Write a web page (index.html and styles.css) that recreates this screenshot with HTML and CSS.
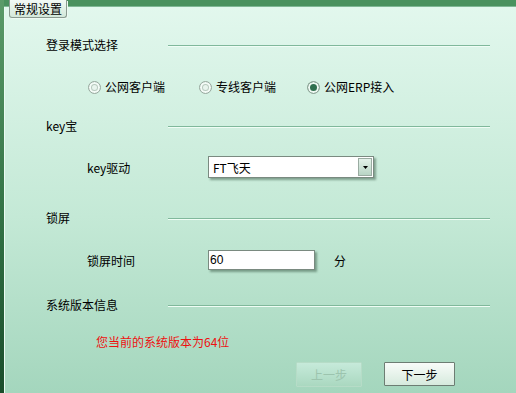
FILE: index.html
```html
<!DOCTYPE html>
<html lang="zh-CN">
<head>
    <meta charset="UTF-8">
    <title>常规设置</title>
    <link rel="stylesheet" href="styles.css">
</head>
<body>
    <div class="window">
        <div class="edge"></div>
        <div class="main">
            <div class="topbar">
                <div class="tab">常规设置</div>
            </div>

            <div class="panel">
                <div class="section-head">
                    <span class="title">登录模式选择</span>
                    <span class="rule"></span>
                </div>
                <div class="radio-row">
                    <label class="radio item-1"><span class="dot"></span>公网客户端</label>
                    <label class="radio item-2"><span class="dot"></span>专线客户端</label>
                    <label class="radio checked"><span class="dot"></span>公网ERP接入</label>
                </div>

                <div class="section-head head-key">
                    <span class="title">key宝</span>
                    <span class="rule"></span>
                </div>
                <div class="field-row row-key">
                    <span class="field-label">key驱动</span>
                    <div class="select">
                        <span class="select-text">FT飞天</span>
                        <span class="select-btn">
                            <svg width="5" height="3" viewBox="0 0 5 3"><path d="M0 0h5L2.5 3z" fill="#000"/></svg>
                        </span>
                    </div>
                </div>

                <div class="section-head head-lock">
                    <span class="title">锁屏</span>
                    <span class="rule"></span>
                </div>
                <div class="field-row row-lock">
                    <span class="field-label">锁屏时间</span>
                    <div class="textbox">60</div>
                    <span class="unit">分</span>
                </div>

                <div class="section-head head-version">
                    <span class="title">系统版本信息</span>
                    <span class="rule"></span>
                </div>
                <div class="version-note">您当前的系统版本为64位</div>

                <div class="buttons">
                    <button class="btn btn-disabled" disabled>上一步</button>
                    <button class="btn btn-next">下一步</button>
                </div>
            </div>
        </div>
    </div>
</body>
</html>
```

FILE: styles.css
```css
body {
    margin: 0;
    padding: 0;
    font-family: "Noto Sans CJK SC", "Liberation Sans", sans-serif;
    font-size: 12px;
    color: #000;
}

.window {
    width: 516px;
    height: 393px;
    display: flex;
    overflow: hidden;
    background: linear-gradient(#e3f8ee, #c4e9d6 55%, #a4d6bd);
}

.edge {
    width: 4px;
    background: linear-gradient(#5b9b69, #2f6e42 60%, #1a4d2b);
    box-shadow: 1px 0 0 #eafaf2;
}

.main {
    flex: 1;
    display: flex;
    flex-direction: column;
}

.topbar {
    height: 6px;
    background: #4a915e;
    box-shadow: 0 1px 0 #7fb795;
    position: relative;
}

/* tab hangs over the panel below */
.tab {
    position: absolute;
    left: 5px;
    top: 0;
    width: 52px;
    height: 17px;
    padding-left: 4px;
    line-height: 17px;
    border: 1px solid #8a9a90;
    border-top: none;
    border-radius: 0 0 3px 3px;
    background: linear-gradient(#f2faf5, #d3e8da);
    box-shadow: 1px 1px 0 #eefaf3;
}

.panel {
    padding-top: 30px;
}

/* section headings with a groove line */
.section-head {
    display: flex;
    align-items: center;
    height: 18px;
    line-height: 18px;
    padding-left: 42px;
}

.section-head .title {
    width: 122px;
}

.section-head .rule {
    width: 322px;
    height: 1px;
    background: #80b89b;
    box-shadow: 0 1px 0 #effdf5;
}

.head-key {
    margin-top: 21px;
}

.head-lock {
    margin-top: 31px;
}

.head-version {
    margin-top: 26px;
}

/* radio buttons */
.radio-row {
    display: flex;
    align-items: center;
    height: 18px;
    margin-top: 24px;
    padding-left: 84px;
    line-height: 18px;
}

.radio {
    display: flex;
    align-items: center;
}

.item-1 {
    width: 111px;
}

.item-2 {
    width: 108px;
}

.dot {
    width: 11px;
    height: 11px;
    margin-right: 4px;
    border: 1px solid #97a89e;
    border-radius: 50%;
    background: #e9f5ee;
    box-shadow: inset 0 0 0 2px #f4fbf7, inset 0 0 0 3px #b9cabf;
}

.radio.checked .dot {
    background: #2f6f4e;
    box-shadow: inset 0 0 0 2px #eef8f2;
}

/* field rows */
.field-row {
    display: flex;
    align-items: center;
    padding-left: 83px;
}

.field-label {
    width: 121px;
}

.row-key {
    margin-top: 21px;
    height: 22px;
}

.row-lock {
    margin-top: 23px;
    height: 20px;
}

.select {
    width: 164px;
    height: 20px;
    display: flex;
    align-items: center;
    justify-content: space-between;
    border: 1px solid #7a8a80;
    background: #fff;
    box-shadow: 2px 2px 2px rgba(40, 70, 50, 0.45);
}

.select-text {
    padding-left: 4px;
}

.select-btn {
    width: 12px;
    height: 16px;
    margin-right: 1px;
    display: flex;
    align-items: center;
    justify-content: center;
    border: 1px solid #9aaba1;
    background: linear-gradient(#e4f2ea, #b8d4c4);
}

.textbox {
    width: 104px;
    height: 18px;
    line-height: 18px;
    padding-left: 1px;
    border: 1px solid #7a8a80;
    background: #fff;
    box-shadow: 2px 2px 2px rgba(40, 70, 50, 0.45);
    font-family: "Liberation Sans", sans-serif;
}

.unit {
    margin-left: 19px;
}

.version-note {
    margin-top: 19px;
    height: 18px;
    line-height: 18px;
    padding-left: 92px;
    color: #ee1010;
}

/* bottom buttons */
.buttons {
    display: flex;
    margin-top: 11px;
    padding-left: 292px;
    gap: 22px;
}

.btn {
    font-family: inherit;
    font-size: 12px;
    padding: 0;
    margin: 0;
    border-radius: 1px;
}

.btn-disabled {
    width: 66px;
    height: 25px;
    color: #9cc4ae;
    border: 1px solid #b6dcc7;
    background: linear-gradient(#c6eada, #aad8c0);
}

.btn-next {
    width: 71px;
    height: 24px;
    color: #000;
    border: 1px solid #6d7d73;
    background: linear-gradient(#f8fcf9, #d6eadd);
    cursor: pointer;
}
```
